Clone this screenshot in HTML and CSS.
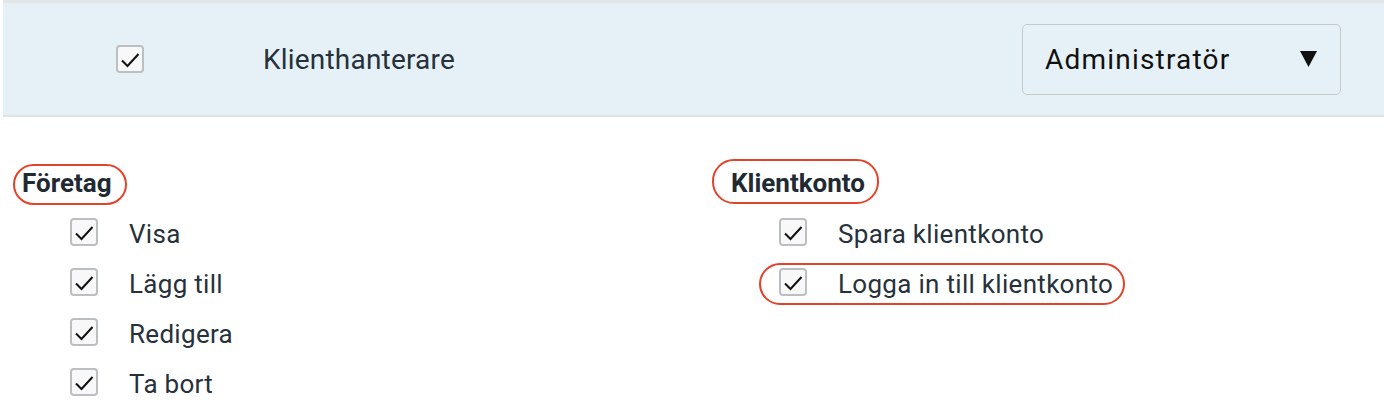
FILE: index.html
```html
<!DOCTYPE html>
<html lang="sv">
<head>
  <meta charset="UTF-8">
  <meta name="viewport" content="width=device-width, initial-scale=1.0">
  <title>Behörigheter</title>
  <link rel="stylesheet" href="styles.css">
</head>
<body>
  <div class="role-row">
    <span class="check">
      <svg viewBox="2 2 24 24"><path d="M6 15.5 L11.5 21 L22.5 9"/></svg>
    </span>
    <span class="role-name">Klienthanterare</span>
    <div class="select">
      <span>Administratör</span>
      <svg class="caret" viewBox="0 0 17 16"><polygon points="0,0 17,0 8.5,16"/></svg>
    </div>
  </div>

  <div class="groups">
    <section class="group">
      <h3><span class="mark mark-foretag">Företag</span></h3>
      <ul>
        <li><span class="item"><span class="check"><svg viewBox="2 2 24 24"><path d="M6 15.5 L11.5 21 L22.5 9"/></svg></span><span class="label">Visa</span></span></li>
        <li><span class="item"><span class="check"><svg viewBox="2 2 24 24"><path d="M6 15.5 L11.5 21 L22.5 9"/></svg></span><span class="label">Lägg till</span></span></li>
        <li><span class="item"><span class="check"><svg viewBox="2 2 24 24"><path d="M6 15.5 L11.5 21 L22.5 9"/></svg></span><span class="label">Redigera</span></span></li>
        <li><span class="item"><span class="check"><svg viewBox="2 2 24 24"><path d="M6 15.5 L11.5 21 L22.5 9"/></svg></span><span class="label">Ta bort</span></span></li>
      </ul>
    </section>
    <section class="group">
      <h3><span class="mark mark-klient">Klientkonto</span></h3>
      <ul>
        <li><span class="item"><span class="check"><svg viewBox="2 2 24 24"><path d="M6 15.5 L11.5 21 L22.5 9"/></svg></span><span class="label">Spara klientkonto</span></span></li>
        <li><span class="item mark mark-login"><span class="check"><svg viewBox="2 2 24 24"><path d="M6 15.5 L11.5 21 L22.5 9"/></svg></span><span class="label">Logga in till klientkonto</span></span></li>
      </ul>
    </section>
  </div>
</body>
</html>
```

FILE: styles.css
```css
* { margin: 0; padding: 0; box-sizing: border-box; }
body {
  font-family: Roboto, "Liberation Sans", sans-serif;
  background: #fff;
  color: #27313b;
}

/* Role header */
.role-row {
  display: flex;
  align-items: center;
  height: 117px;
  margin-left: 3px;
  padding: 0 43px 0 113px;
  background: #e6f1f7;
  border-top: 3px solid #e3e5e6;
  border-bottom: 2px solid #dfe3e5;
}
.role-name {
  font-size: 28px;
  margin-left: 119px;
  letter-spacing: 0.2px;
}
.select {
  display: flex;
  align-items: center;
  justify-content: space-between;
  margin-left: auto;
  width: 319px;
  height: 71px;
  padding: 0 23px 0 22px;
  border: 1.5px solid #c5c9cc;
  border-radius: 5px;
  font-size: 28px;
  letter-spacing: 1.2px;
  color: #111;
}
.caret { width: 17px; height: 16px; fill: #111; }

/* Checkbox */
.check {
  display: inline-flex;
  flex-shrink: 0;
  width: 28px;
  height: 28px;
  border: 2px solid #bcbfc2;
  border-radius: 4px;
  background: #f8f8f8;
}
.check svg { width: 24px; height: 24px; }
.check path { fill: none; stroke: #111; stroke-width: 2; }

/* Permission groups */
.groups {
  display: grid;
  grid-template-columns: 709px 1fr;
  padding: 51px 0 0 22px;
}
.group h3 {
  font-size: 26px;
  line-height: 30px;
  font-weight: 700;
  color: #212a32;
}
.group ul {
  list-style: none;
  margin-top: 9px;
  padding-left: 48px;
}
.group li {
  height: 50px;
  display: flex;
  align-items: center;
}
.item {
  display: inline-flex;
  align-items: center;
}
.label {
  font-size: 26px;
  line-height: 30px;
  margin-left: 31px;
  padding-top: 3px;
  letter-spacing: 0.3px;
}

/* Red annotation rings */
.mark { position: relative; }
.mark::after {
  content: "";
  position: absolute;
  border: 2.5px solid #e4432b;
  border-radius: 22px;
}
.mark-foretag::after { inset: -4px -15px -7px -9px; }
.mark-klient::after { inset: -9px -14px -6px -19px; }
.mark-login::after { inset: -3px -12px -6px -20px; }
```
